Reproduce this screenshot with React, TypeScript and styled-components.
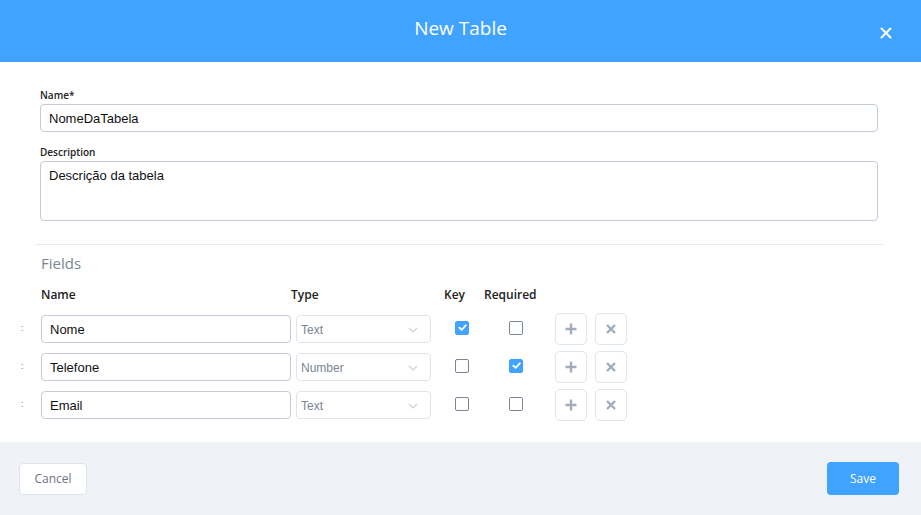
import React from "react";
import styled, { createGlobalStyle } from "styled-components";

const GlobalStyle = createGlobalStyle`
  html, body {
    margin: 0;
    padding: 0;
    background: #fff;
  }
  body {
    font-family: "Open Sans", "Noto Sans", sans-serif;
    color: #222;
  }
  * {
    box-sizing: border-box;
  }
`;

type Field = {
  name: string;
  type: string;
  key: boolean;
  required: boolean;
};

const fields: Field[] = [
  { name: "Nome", type: "Text", key: true, required: false },
  { name: "Telefone", type: "Number", key: false, required: true },
  { name: "Email", type: "Text", key: false, required: false },
];

const columns = "25px 250px 149px 40px 65px auto";

const Check = ({ checked, offset }: { checked: boolean; offset: number }) => (
  <S.CheckBox $checked={checked} $offset={offset}>
    {checked && (
      <svg width="11" height="11" viewBox="0 0 12 12">
        <path
          d="M2.5 6.2 L5 8.5 L9.6 3.6"
          fill="none"
          stroke="#fff"
          strokeWidth="2"
          strokeLinecap="round"
          strokeLinejoin="round"
        />
      </svg>
    )}
  </S.CheckBox>
);

const App = () => {
  return (
    <>
      <GlobalStyle />
      <S.Modal>
        <S.Header>
          <S.Title>New Table</S.Title>
          <S.Close aria-label="close">
            <svg width="12" height="12" viewBox="0 0 12 12">
              <path
                d="M1.5 1.5 L10.5 10.5 M10.5 1.5 L1.5 10.5"
                stroke="#fff"
                strokeWidth="2"
                strokeLinecap="round"
              />
            </svg>
          </S.Close>
        </S.Header>

        <S.Body>
          <S.Label>Name*</S.Label>
          <S.TextInput defaultValue="NomeDaTabela" />
          <S.Label $top={13}>Description</S.Label>
          <S.TextArea defaultValue="Descrição da tabela" />

          <S.Divider />

          <S.SectionTitle>Fields</S.SectionTitle>

          <S.HeadRow>
            <span />
            <S.ColHead>Name</S.ColHead>
            <S.ColHead>Type</S.ColHead>
            <S.ColHead $pad={4}>Key</S.ColHead>
            <S.ColHead $pad={4}>Required</S.ColHead>
            <span />
          </S.HeadRow>

          <S.Rows>
            {fields.map((f) => (
              <React.Fragment key={f.name}>
                <S.Handle>:</S.Handle>
                <S.FieldInput defaultValue={f.name} />
                <S.Select>
                  <span>{f.type}</span>
                  <svg width="10" height="6" viewBox="0 0 10 6">
                    <path
                      d="M1 1 L5 5 L9 1"
                      fill="none"
                      stroke="#c9d1db"
                      strokeWidth="1.2"
                    />
                  </svg>
                </S.Select>
                <Check checked={f.key} offset={15} />
                <Check checked={f.required} offset={29} />
                <S.Actions>
                  <S.IconButton aria-label="add">
                    <svg width="12" height="12" viewBox="0 0 12 12">
                      <path
                        d="M6 0.5 V11.5 M0.5 6 H11.5"
                        stroke="#a1adbc"
                        strokeWidth="2.4"
                      />
                    </svg>
                  </S.IconButton>
                  <S.IconButton aria-label="remove">
                    <svg width="10" height="10" viewBox="0 0 10 10">
                      <path
                        d="M1 1 L9 9 M9 1 L1 9"
                        stroke="#a1adbc"
                        strokeWidth="2.4"
                      />
                    </svg>
                  </S.IconButton>
                </S.Actions>
              </React.Fragment>
            ))}
          </S.Rows>
        </S.Body>

        <S.Footer>
          <S.CancelButton>Cancel</S.CancelButton>
          <S.SaveButton>Save</S.SaveButton>
        </S.Footer>
      </S.Modal>
    </>
  );
};

export default App;

const S = {
  Modal: styled.div`
    width: 921px;
    height: 515px;
    display: flex;
    flex-direction: column;
    background: #fff;
  `,

  Header: styled.div`
    position: relative;
    height: 62px;
    flex: none;
    background: #3fa3ff;
    display: flex;
    align-items: center;
    justify-content: center;
  `,

  Title: styled.div`
    color: #fff;
    font-size: 19px;
    font-weight: 400;
    margin-top: -6px;
  `,

  Close: styled.button`
    position: absolute;
    right: 29px;
    top: 27px;
    width: 12px;
    height: 12px;
    padding: 0;
    border: none;
    background: none;
    display: flex;
    cursor: pointer;
  `,

  Body: styled.div`
    flex: 1;
    padding: 26px 43px 0 40px;
    display: flex;
    flex-direction: column;
  `,

  Label: styled.div<{ $top?: number }>`
    font-size: 10px;
    line-height: 14px;
    font-weight: 600;
    color: #222;
    margin-top: ${(p) => p.$top ?? 0}px;
    margin-bottom: 2px;
  `,

  TextInput: styled.input`
    height: 28px;
    width: 838px;
    border: 1px solid #c3ccd7;
    border-radius: 4px;
    padding: 0 8px;
    font-family: "Liberation Sans", Arial, sans-serif;
    font-size: 13px;
    color: #111;
    outline: none;
  `,

  TextArea: styled.textarea`
    height: 60px;
    width: 838px;
    border: 1px solid #c3ccd7;
    border-radius: 4px;
    padding: 6px 8px;
    font-family: "Liberation Sans", Arial, sans-serif;
    font-size: 13px;
    line-height: 16px;
    color: #111;
    resize: none;
    outline: none;
  `,

  Divider: styled.div`
    height: 1px;
    background: #e6ebf0;
    margin: 23px -5px 0 -5px;
  `,

  SectionTitle: styled.div`
    font-size: 15px;
    line-height: 20px;
    color: #7a8694;
    margin-top: 8px;
    margin-left: 1px;
  `,

  HeadRow: styled.div`
    display: grid;
    grid-template-columns: ${columns};
    align-items: center;
    margin-left: -24px;
    margin-top: 15px;
  `,

  Rows: styled.div`
    display: grid;
    grid-template-columns: ${columns};
    grid-auto-rows: 32px;
    row-gap: 6px;
    align-items: center;
    margin-left: -24px;
    margin-top: 11px;
  `,

  ColHead: styled.div<{ $pad?: number }>`
    font-size: 12px;
    line-height: 14px;
    font-weight: 600;
    color: #222;
    padding-left: ${(p) => p.$pad ?? 0}px;
  `,

  Handle: styled.div`
    font-family: "Liberation Sans", Arial, sans-serif;
    font-size: 9px;
    color: #777;
    padding-left: 5px;
    margin-top: -2px;
  `,

  FieldInput: styled.input`
    height: 28px;
    width: 250px;
    border: 1px solid #c3ccd7;
    border-radius: 4px;
    padding: 0 8px;
    font-family: "Liberation Sans", Arial, sans-serif;
    font-size: 13px;
    color: #111;
    outline: none;
  `,

  Select: styled.div`
    height: 28px;
    width: 135px;
    margin-left: 5px;
    border: 1px solid #dfe5ed;
    border-radius: 4px;
    padding: 2px 12px 0 4px;
    display: flex;
    align-items: center;
    justify-content: space-between;
    font-family: "Liberation Sans", Arial, sans-serif;
    font-size: 12px;
    color: #7b8593;
  `,

  CheckBox: styled.span<{ $checked: boolean; $offset: number }>`
    width: 14px;
    height: 14px;
    margin-left: ${(p) => p.$offset}px;
    margin-top: -3px;
    border-radius: 2px;
    border: 1px solid ${(p) => (p.$checked ? "#3fa3ff" : "#7b8598")};
    background: ${(p) => (p.$checked ? "#3fa3ff" : "#fff")};
    display: flex;
    align-items: center;
    justify-content: center;
  `,

  Actions: styled.div`
    display: flex;
    gap: 8px;
    margin-left: 10px;
  `,

  IconButton: styled.button`
    width: 32px;
    height: 32px;
    padding: 0;
    border: 1px solid #e0e6ee;
    border-radius: 5px;
    background: #fff;
    display: flex;
    align-items: center;
    justify-content: center;
    cursor: pointer;
  `,

  Footer: styled.div`
    height: 73px;
    flex: none;
    background: #eff3f8;
    display: flex;
    align-items: center;
    justify-content: space-between;
    padding: 0 22px 0 19px;
  `,

  CancelButton: styled.button`
    width: 68px;
    height: 32px;
    border: 1px solid #dde4ec;
    border-radius: 4px;
    background: #fff;
    color: #6b7684;
    font-family: "Open Sans", "Noto Sans", sans-serif;
    font-size: 12px;
    cursor: pointer;
  `,

  SaveButton: styled.button`
    width: 72px;
    height: 33px;
    border: none;
    border-radius: 4px;
    background: #3fa3ff;
    color: #fff;
    font-family: "Open Sans", "Noto Sans", sans-serif;
    font-size: 12px;
    cursor: pointer;
  `,
};
